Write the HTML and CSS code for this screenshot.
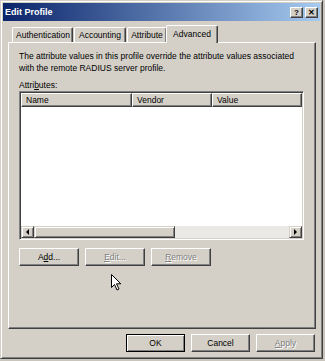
FILE: index.html
```html
<!DOCTYPE html>
<html>
<head>
    <title>Edit Profile</title>
    <link rel="stylesheet" href="styles.css">
</head>
<body>
<div class="window">
    <!-- Caption -->
    <div class="titlebar">
        <span class="title">Edit Profile</span>
        <div class="caption-btns">
            <span class="cbtn">?</span>
            <span class="cbtn">&#x2715;</span>
        </div>
    </div>

    <div class="dialog">
        <!-- Tabs -->
        <div class="tabs">
            <div class="tab">Authentication</div>
            <div class="tab">Accounting</div>
            <div class="tab">Attribute</div>
            <div class="tab active">Advanced</div>
        </div>

        <div class="panel">
            <p class="desc">The attribute values in this profile override the attribute values associated with the remote RADIUS server profile.</p>
            <div class="label">Attri<u>b</u>utes:</div>

            <div class="listview">
                <div class="lv-header">
                    <div class="col col-name">Name</div>
                    <div class="col col-vendor">Vendor</div>
                    <div class="col col-value">Value</div>
                </div>
                <div class="lv-body"></div>
                <div class="hscroll">
                    <div class="sb-btn"><span class="arrow-left"></span></div>
                    <div class="sb-thumb"></div>
                    <div class="sb-track"></div>
                    <div class="sb-btn"><span class="arrow-right"></span></div>
                </div>
            </div>

            <div class="btn-row">
                <div class="btn">A<u>d</u>d...</div>
                <div class="btn disabled"><u>E</u>dit...</div>
                <div class="btn disabled"><u>R</u>emove</div>
            </div>
        </div>

        <div class="footer">
            <div class="btn default">OK</div>
            <div class="btn">Cancel</div>
            <div class="btn disabled"><u>A</u>pply</div>
        </div>
    </div>
</div>

<!-- Mouse pointer -->
<svg class="cursor" width="11" height="17" viewBox="0 0 11 17">
    <path d="M0.5 0.5 L0.5 13.5 L3.5 10.5 L6 16 L8 15 L5.5 9.8 L9.8 9.8 Z" fill="#fff" stroke="#000" stroke-width="1"/>
</svg>
</body>
</html>
```

FILE: styles.css
```css
body {
    margin: 0;
    width: 325px;
    height: 361px;
    overflow: hidden;
    background: #c9c5bd;
    font-family: "Liberation Sans", Arial, sans-serif;
    font-size: 8.5px;
    color: #000;
    position: relative;
}

.window {
    box-sizing: border-box;
    width: 323px;
    height: 359px;
    background: #d4d0c8;
    border: 1px solid;
    border-color: #d4d0c8 #404040 #404040 #d4d0c8;
    box-shadow: inset 1px 1px #fff, inset -1px -1px #808080;
    padding: 2px;
    display: flex;
    flex-direction: column;
}

.titlebar {
    height: 18px;
    background: linear-gradient(90deg, #0a246a, #a6caf0);
    display: flex;
    align-items: center;
    justify-content: space-between;
    padding: 0 2px 0 2px;
}

.title {
    color: #fff;
    font-weight: bold;
    font-size: 9px;
}

.caption-btns {
    display: flex;
    gap: 2px;
}

.cbtn {
    box-sizing: border-box;
    width: 13px;
    height: 11px;
    background: #d4d0c8;
    border: 1px solid;
    border-color: #fff #404040 #404040 #fff;
    box-shadow: inset -1px -1px #808080;
    font-size: 8px;
    font-weight: bold;
    line-height: 9px;
    text-align: center;
}

.dialog {
    flex: 1;
    display: flex;
    flex-direction: column;
    padding: 4px 4px 0 5px;
}

/* Tabs */
.tabs {
    display: flex;
    align-items: flex-end;
    height: 17px;
    padding-left: 4px;
}

.tab {
    box-sizing: border-box;
    height: 15px;
    padding: 0 3px;
    border: 1px solid;
    border-color: #fff #404040 transparent #fff;
    border-bottom: none;
    border-radius: 2px 2px 0 0;
    box-shadow: inset -1px 0 #808080;
    line-height: 14px;
    text-align: center;
    margin-right: 1px;
}

.tab:nth-child(1) { width: 61px; }
.tab:nth-child(2) { width: 52px; }
.tab:nth-child(3) { width: 40px; }

.tab.active {
    width: 52px;
    height: 18px;
    margin: 0 0 -1px -2px;
    background: #d4d0c8;
    position: relative;
    z-index: 1;
    line-height: 16px;
}

.panel {
    box-sizing: border-box;
    height: 287px;
    border: 1px solid;
    border-color: #fff #404040 #404040 #fff;
    box-shadow: inset -1px -1px #808080;
    padding: 7px 10px 0 10px;
}

.desc {
    margin: 0;
    line-height: 12px;
}

.label {
    line-height: 12px;
    margin-top: 5px;
}

/* List view */
.listview {
    box-sizing: border-box;
    width: 285px;
    height: 149px;
    border: 1px solid;
    border-color: #808080 #fff #fff #808080;
    box-shadow: inset 1px 1px #404040, inset -1px -1px #d4d0c8;
    padding: 1px;
    display: flex;
    flex-direction: column;
}

.lv-header {
    display: flex;
    height: 14px;
}

.col {
    box-sizing: border-box;
    height: 14px;
    background: #d4d0c8;
    border: 1px solid;
    border-color: #fff #404040 #404040 #fff;
    box-shadow: inset -1px -1px #808080;
    padding-left: 4px;
    line-height: 12px;
}

.col-name { width: 111px; }
.col-vendor { width: 80px; }
.col-value { width: 90px; }

.lv-body {
    flex: 1;
    background: #fff;
}

.hscroll {
    display: flex;
    height: 12px;
}

.sb-btn, .sb-thumb {
    box-sizing: border-box;
    background: #d4d0c8;
    border: 1px solid;
    border-color: #d4d0c8 #404040 #404040 #d4d0c8;
    box-shadow: inset 1px 1px #fff, inset -1px -1px #808080;
}

.sb-btn {
    width: 13px;
    display: flex;
    align-items: center;
    justify-content: center;
}

.sb-thumb { width: 141px; }

.sb-track {
    flex: 1;
    background: #ebe9e5;
}

.arrow-left {
    border-style: solid;
    border-width: 3px 3px 3px 0;
    border-color: transparent #000 transparent transparent;
}

.arrow-right {
    border-style: solid;
    border-width: 3px 0 3px 3px;
    border-color: transparent transparent transparent #000;
}

/* Buttons */
.btn-row {
    display: flex;
    gap: 6px;
    margin-top: 8px;
}

.btn {
    box-sizing: border-box;
    width: 60px;
    height: 18px;
    background: #d4d0c8;
    border: 1px solid;
    border-color: #fff #404040 #404040 #fff;
    box-shadow: inset -1px -1px #808080;
    text-align: center;
    line-height: 16px;
}

.btn.disabled {
    color: #808080;
    text-shadow: 1px 1px #fff;
}

.btn.default {
    border-color: #000;
    box-shadow: inset 1px 1px #fff, inset -1px -1px #808080;
}

.footer {
    display: flex;
    justify-content: flex-end;
    gap: 6px;
    margin-top: 5px;
    padding-right: 1px;
}

.footer .btn { width: 59px; }

.cursor {
    position: absolute;
    left: 111px;
    top: 274px;
}
```
